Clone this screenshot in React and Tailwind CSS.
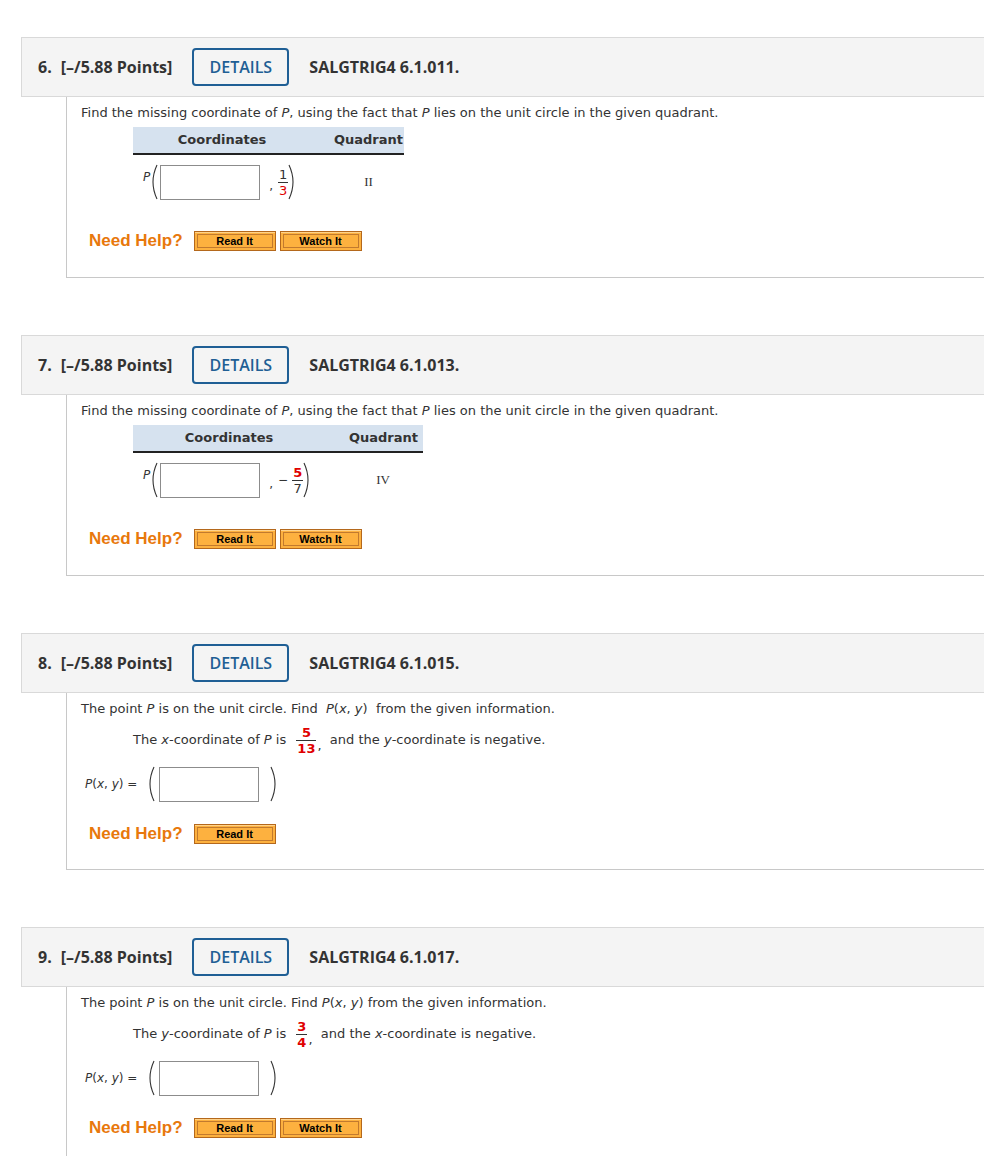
const verdana = { fontFamily: "'DejaVu Sans', Verdana, sans-serif" }

function Paren({ side = "left" }) {
  const d = side === "left" ? "M7 1 Q-1 18 7 35" : "M1 1 Q9 18 1 35"
  return (
    <svg width="8" height="36" viewBox="0 0 8 36" className="shrink-0">
      <path d={d} fill="none" stroke="#333" strokeWidth="1.1" />
    </svg>
  )
}

function Frac({ num, den, numRed, denRed, bold }) {
  const red = bold ? "px-[1px] text-[#e00000] font-bold" : "px-[1px] text-[#e00000]"
  return (
    <span className="inline-flex flex-col items-center text-[13px] leading-[13px] font-['DejaVu_Sans',sans-serif] align-middle">
      <span className={numRed ? red : "px-[1px] text-[#333]"}>{num}</span>
      <span className="my-[1px] w-full border-t border-[#333]" />
      <span className={denRed ? red : "px-[1px] text-[#333]"}>{den}</span>
    </span>
  )
}

function OrangeBtn({ label }) {
  return (
    <div className="h-[20px] w-[82px] border border-[#b4681c] bg-[#fdb13f] p-[2px] shadow-[inset_0_1px_0_#ffd28a]">
      <div className="flex h-full items-center justify-center border border-[#c27a2e] font-['Liberation_Sans',Arial,sans-serif] text-[11px] font-bold text-black">
        {label}
      </div>
    </div>
  )
}

function Help({ watch }) {
  return (
    <div className="flex items-center">
      <span className="ml-[8px] mr-[11px] font-['Liberation_Sans',Arial,sans-serif] text-[17px] font-bold text-[#e8780c]">
        Need Help?
      </span>
      <OrangeBtn label="Read It" />
      {watch && (
        <div className="ml-[4px]">
          <OrangeBtn label="Watch It" />
        </div>
      )}
    </div>
  )
}

function Header({ num, code }) {
  return (
    <div className="flex h-[60px] items-center border border-r-0 border-[#d9d9d9] bg-[#f4f4f4] pl-[16px] font-['Open_Sans',sans-serif] text-[16px] font-bold text-[#333]">
      <span>{num}.</span>
      <span className="ml-[9px]">[–/5.88 Points]</span>
      <div className="ml-[20px] flex h-[38px] w-[97px] items-center justify-center rounded-[4px] border-2 border-[#1f5f95] font-semibold text-[#1f5f95]">
        DETAILS
      </div>
      <span className="ml-[20px]">{code}</span>
    </div>
  )
}

function Input() {
  return <div className="h-[35px] w-[100px] shrink-0 border border-[#8c8c8c] bg-white" />
}

function TableQuestion({ num, code, col1, col2, quadPl, quadPr, tail, quad }) {
  return (
    <div className="ml-[21px]">
      <Header num={num} code={code} />
      <div className="ml-[45px] h-[181px] border-b border-l border-[#c8c8c8] pl-[14px] pt-[8px] text-[13px] text-[#333]" style={verdana}>
        <div className="h-[16px] leading-[16px]">
          Find the missing coordinate of <i>P</i>, using the fact that <i>P</i> lies on the unit circle in the given quadrant.
        </div>
        <div className="ml-[52px] mt-[6px] w-fit">
          <div className="flex h-[28px] border-b-2 border-[#222] bg-[#d6e2ef] font-bold">
            <div className={`${col1} flex items-center justify-center`}>Coordinates</div>
            <div className={`${col2} ${quadPr} flex items-center justify-end`}>Quadrant</div>
          </div>
          <div className="mt-[9px] flex h-[36px] items-center">
            <div className={`${col1} flex items-center pl-[10px]`}>
              <i className="mb-[10px] text-[12px]">P</i>
              <Paren side="left" />
              <div className="ml-[2px]">
                <Input />
              </div>
              <span className="ml-[9px] mt-[8px] text-[12px]">,</span>
              {tail}
              <Paren side="right" />
            </div>
            <div className={`${col2} ${quadPl} text-center font-['Liberation_Serif',serif] text-[13px]`}>{quad}</div>
          </div>
        </div>
        <div className="mt-[28px]">
          <Help watch />
        </div>
      </div>
    </div>
  )
}

function PointQuestion({ num, code, intro, given, watch }) {
  return (
    <div className="ml-[21px]">
      <Header num={num} code={code} />
      <div className="ml-[45px] h-[177px] border-b border-l border-[#c8c8c8] pl-[14px] pt-[8px] text-[13px] text-[#333]" style={verdana}>
        <div className="h-[16px] leading-[16px] whitespace-pre">{intro}</div>
        <div className="ml-[52px] mt-[8px] flex h-[30px] items-center whitespace-pre">{given}</div>
        <div className="mt-[11px] flex h-[36px] items-center">
          <span className="ml-[4px] text-[12px]">
            <i>P</i>(<i>x</i>, <i>y</i>) =
          </span>
          <div className="ml-[10px]">
            <Paren side="left" />
          </div>
          <div className="ml-[4px]">
            <Input />
          </div>
          <div className="ml-[11px]">
            <Paren side="right" />
          </div>
        </div>
        <div className="mt-[19px]">
          <Help watch={watch} />
        </div>
      </div>
    </div>
  )
}

export default function App() {
  return (
    <div className="min-h-screen bg-white pt-[37px]">
      <TableQuestion
        num="6"
        code="SALGTRIG4 6.1.011."
        col1="w-[178px]"
        col2="w-[93px]"
        quadPr="pr-[1px]"
        quadPl="pl-[22px]"
        quad="II"
        tail={
          <span className="ml-[5px]">
            <Frac num="1" den="3" denRed />
          </span>
        }
      />
      <div className="h-[57px]" />
      <TableQuestion
        num="7"
        code="SALGTRIG4 6.1.013."
        col1="w-[192px]"
        col2="w-[98px]"
        quadPr="pr-[5px]"
        quadPl="pl-[18px]"
        quad="IV"
        tail={
          <span className="ml-[5px] flex items-center">
            <span className="mr-[4px] text-[12px]">−</span>
            <Frac num="5" den="7" numRed bold />
          </span>
        }
      />
      <div className="h-[57px]" />
      <PointQuestion
        num="8"
        code="SALGTRIG4 6.1.015."
        watch={false}
        intro={
          <>
            The point <i>P</i> is on the unit circle. Find{"  "}
            <i>P</i>(<i>x</i>, <i>y</i>){"  "}from the given information.
          </>
        }
        given={
          <>
            The <i>x</i>-coordinate of <i>P</i> is{" "}
            <span className="ml-[6px] mr-[1px]">
              <Frac num="5" den="13" numRed denRed bold />
            </span>
            <span className="mt-[12px]">,</span>  and the <i>y</i>-coordinate is negative.
          </>
        }
      />
      <div className="h-[57px]" />
      <PointQuestion
        num="9"
        code="SALGTRIG4 6.1.017."
        watch
        intro={
          <>
            The point <i>P</i> is on the unit circle. Find <i>P</i>(<i>x</i>, <i>y</i>) from the given information.
          </>
        }
        given={
          <>
            The <i>y</i>-coordinate of <i>P</i> is{" "}
            <span className="ml-[6px] mr-[1px]">
              <Frac num="3" den="4" numRed denRed bold />
            </span>
            <span className="mt-[12px]">,</span>  and the <i>x</i>-coordinate is negative.
          </>
        }
      />
    </div>
  )
}
